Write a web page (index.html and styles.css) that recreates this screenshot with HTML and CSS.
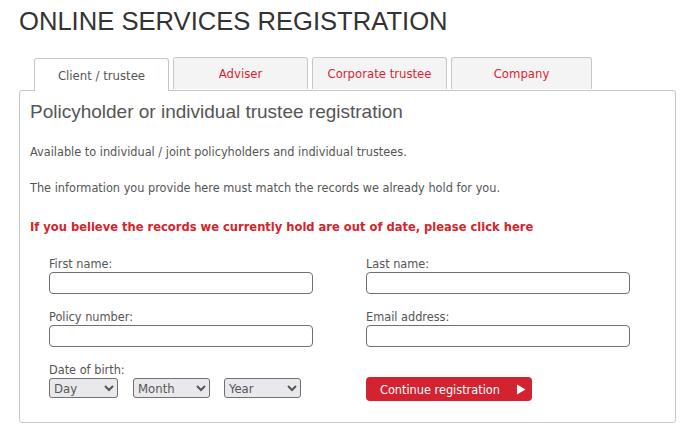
FILE: index.html
```html
<!DOCTYPE html>
<html lang="en">

<head>
    <meta charset="UTF-8">
    <meta name="viewport" content="width=device-width, initial-scale=1.0">
    <title>Online services registration</title>
    <link rel="stylesheet" href="styles.css">
</head>

<body>
    <div class="page">
        <h1>ONLINE SERVICES REGISTRATION</h1>

        <div class="tabs">
            <a class="tab active" href="#">Client / trustee</a>
            <a class="tab" href="#">Adviser</a>
            <a class="tab" href="#">Corporate trustee</a>
            <a class="tab wide" href="#">Company</a>
        </div>

        <div class="panel">
            <h2>Policyholder or individual trustee registration</h2>
            <p>Available to individual / joint policyholders and individual trustees.</p>
            <p>The information you provide here must match the records we already hold for you.</p>
            <p class="notice"><a href="#">If you believe the records we currently hold are out of date, please click here</a></p>

            <form class="reg-form">
                <div class="field">
                    <label for="firstName">First name:</label>
                    <input type="text" id="firstName">
                </div>
                <div class="field">
                    <label for="lastName">Last name:</label>
                    <input type="text" id="lastName">
                </div>
                <div class="field">
                    <label for="policyNumber">Policy number:</label>
                    <input type="text" id="policyNumber">
                </div>
                <div class="field">
                    <label for="email">Email address:</label>
                    <input type="text" id="email">
                </div>
                <div class="field">
                    <label for="dobDay">Date of birth:</label>
                    <div class="dob">
                        <select id="dobDay" class="day">
                            <option>Day</option>
                        </select>
                        <select class="month">
                            <option>Month</option>
                        </select>
                        <select class="year">
                            <option>Year</option>
                        </select>
                    </div>
                </div>
                <div class="field">
                    <button type="button" class="continue-button">
                        Continue registration
                        <svg width="10" height="11" viewBox="0 0 10 11"><path d="M1 0.5 L9.5 5.5 L1 10.5 Z" fill="#fff"/></svg>
                    </button>
                </div>
            </form>
        </div>
    </div>
</body>

</html>
```

FILE: styles.css
```css
body {
    margin: 0;
    background-color: #fff;
    color: #555;
    font-family: "DejaVu Sans Condensed", "DejaVu Sans", sans-serif;
    font-size: 12.6px;
}

.page {
    padding: 0 14px 0 19px;
}

h1 {
    margin: 5px 0 0 0;
    font-family: "Liberation Sans", Arial, sans-serif;
    font-size: 25.6px;
    line-height: 32px;
    font-weight: normal;
    color: #333;
}

.tabs {
    display: flex;
    gap: 4px;
    margin: 20px 0 0 15px;
    height: 33px;
}

.tab {
    width: 135px;
    height: 32px;
    box-sizing: border-box;
    border: 1px solid #c8c8c2;
    border-bottom: none;
    border-radius: 3px 3px 0 0;
    background-color: #f4f4f4;
    color: #dc1f33;
    font-size: 13px;
    text-decoration: none;
    text-align: center;
    line-height: 31px;
}

.tab.wide {
    width: 141px;
}

.tab.active {
    position: relative;
    z-index: 1;
    height: 33px;
    margin-top: 1px;
    background-color: #fff;
    color: #555;
    line-height: 33px;
}

.panel {
    border: 1px solid #c8c8c2;
    border-radius: 3px;
    padding: 10px 10px 21px 10px;
}

h2 {
    margin: 0;
    font-family: "Liberation Sans", Arial, sans-serif;
    font-size: 19px;
    line-height: 22px;
    font-weight: normal;
    color: #555;
}

p {
    margin: 20px 0 0 0;
    line-height: 16px;
}

.panel h2 + p {
    margin-top: 21px;
}

.notice {
    margin-top: 23px;
    font-size: 12.8px;
    font-weight: bold;
}

.notice a {
    color: #d8232a;
    text-decoration: none;
}

.reg-form {
    display: grid;
    grid-template-columns: 264px 264px;
    column-gap: 53px;
    row-gap: 15px;
    margin: 21px 0 0 19px;
}

.field label {
    display: block;
    line-height: 16px;
}

.field input {
    display: block;
    width: 100%;
    height: 22px;
    box-sizing: border-box;
    border: 1px solid #707070;
    border-radius: 4px;
    background-color: #fff;
    font-family: inherit;
    font-size: 13px;
}

.dob {
    display: flex;
}

.dob select {
    height: 20px;
    box-sizing: border-box;
    border: 1px solid #707070;
    border-radius: 3px;
    background-color: #e9e9ed;
    color: #555;
    font-family: inherit;
    font-size: 13px;
    padding: 0;
}

.dob .day {
    width: 69px;
}

.dob .month {
    width: 77px;
    margin-left: 15px;
}

.dob .year {
    width: 77px;
    margin-left: 14px;
}

.continue-button {
    display: flex;
    align-items: center;
    justify-content: space-between;
    width: 166px;
    height: 24px;
    margin-top: 15px;
    padding: 0 6px 0 14px;
    border: none;
    border-radius: 4px;
    background-color: #d42330;
    color: #fff;
    font-family: inherit;
    font-size: 12.6px;
    cursor: pointer;
}
```
